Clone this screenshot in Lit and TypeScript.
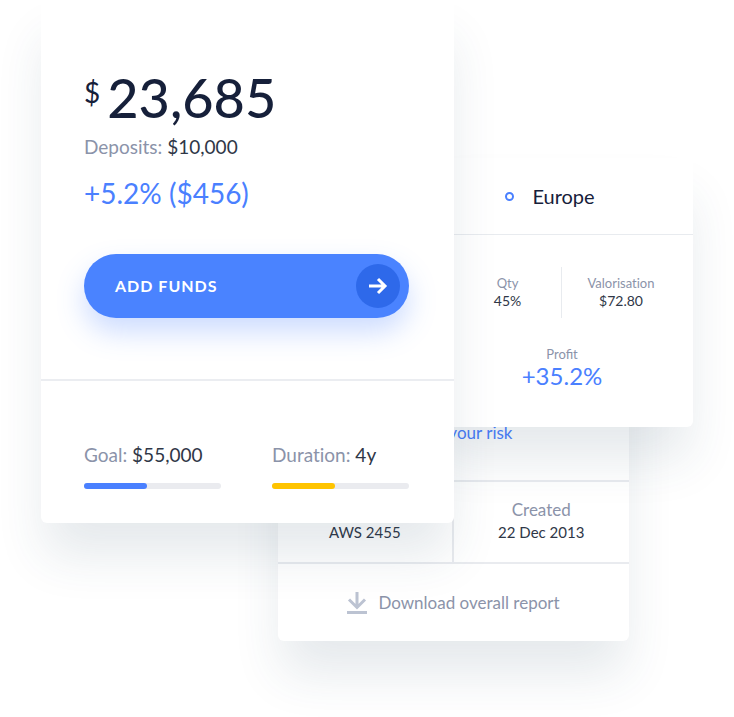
import { LitElement, html, css } from "lit";
import { customElement, property } from "lit/decorators.js";

@customElement("progress-meter")
class ProgressMeter extends LitElement {
  @property() label = "";
  @property() value = "";
  @property({ type: Number }) percent = 0;
  @property() tone = "blue";

  static styles = css`
    :host { display: block; flex: 1; }
    .caption {
      font-size: 19px;
      line-height: 24px;
      font-variant-ligatures: none;
      white-space: nowrap;
      color: #8b93a9;
    }
    .value { color: #2f3747; }
    .track { margin-top: 16px; height: 6px; border-radius: 3px; background: #eaebef; }
    .fill { height: 6px; border-radius: 3px; background: #4a80ff; }
    .fill.yellow { background: #ffc400; }
  `;

  render() {
    return html`
      <div class="caption" id="caption">${this.label}: <span class="value">${this.value}</span></div>
      <div class="track" role="progressbar" aria-labelledby="caption" aria-valuenow=${this.percent}>
        <div class="fill ${this.tone}" style="width:${this.percent}%"></div>
      </div>
    `;
  }
}

@customElement("app-root")
class AppRoot extends LitElement {
  static styles = css`
    :host {
      display: block;
      min-height: 100vh;
      overflow: hidden;
      background: #fff;
      font-family: Lato, "Open Sans", sans-serif;
      color: #2f3747;
    }
    * { box-sizing: border-box; }
    h1, h2, p, dl, dd { margin: 0; font-weight: 400; }
    .stage {
      display: grid;
      grid-template-columns: 41fr 237fr 153fr 23fr 175fr 64fr 41fr;
      align-items: start;
      padding-bottom: 76px;
    }
    .card {
      grid-row: 1;
      min-width: 0;
      background: #fff;
      border-radius: 6px;
      box-shadow: 0 36px 50px -4px rgba(40, 75, 100, 0.12);
    }
    .muted { color: #8b93a9; }
    .blue { color: #4a80ff; }

    .balance { grid-column: 2 / 5; z-index: 3; }
    .summary { padding: 65px 45px 61px 43px; border-bottom: 2px solid #ebedf1; }
    .amount {
      display: flex;
      align-items: flex-start;
      gap: 7px;
      font-size: 54px;
      line-height: 66px;
      font-weight: 500;
      color: #16203a;
    }
    .currency { font-size: 28px; line-height: 54px; font-weight: 400; }
    .deposits { margin-top: 4px; font-size: 19px; line-height: 24px; }
    .change { margin-top: 16px; font-size: 28px; line-height: 36px; }
    .add {
      display: flex;
      align-items: center;
      justify-content: space-between;
      width: 100%;
      height: 64px;
      margin-top: 43px;
      padding: 0 9px 0 31px;
      border: 0;
      border-radius: 32px;
      background: #4a83ff;
      box-shadow: 0 14px 28px rgba(74, 128, 255, 0.28);
      color: #fff;
      font: 700 16px/24px Lato, sans-serif;
      letter-spacing: 1px;
      cursor: pointer;
    }
    .knob {
      display: grid;
      place-items: center;
      width: 44px;
      height: 44px;
      border-radius: 50%;
      background: #2e69ea;
    }
    .goals { display: flex; gap: 51px; padding: 62px 45px 34px 43px; }

    .region { grid-column: 4 / 7; z-index: 2; margin-top: 158px; }
    .region-head {
      display: flex;
      align-items: center;
      justify-content: center;
      gap: 18px;
      height: 77px;
      padding-right: 24px;
      border-bottom: 1px solid #e8ebef;
      font-size: 20px;
      line-height: 24px;
      color: #16203a;
    }
    .dot { width: 9px; height: 9px; border: 2px solid #4a80ff; border-radius: 50%; }
    .stats {
      display: grid;
      grid-template-columns: 107fr 119fr;
      padding: 32px 13px 0 23px;
      text-align: center;
      font-variant-ligatures: none;
    }
    .stat { padding: 7px 0 8px; font-size: 14px; line-height: 18px; }
    .stat + .stat { border-left: 1px solid #e8ebef; }
    .label { font-size: 13px; line-height: 18px; color: #8b93a9; }
    .profit { padding: 27px 0 39px; text-align: center; }
    .profit-value { font-size: 24px; line-height: 25px; }

    .report { grid-column: 3 / 6; z-index: 1; margin-top: 300px; text-align: center; font-size: 17px; line-height: 22px; }
    .risk { padding: 122px 0 36px; border-bottom: 2px solid #e9ebef; }
    .risk a, .download { text-decoration: none; }
    .facts { display: grid; grid-template-columns: 1fr 1fr; border-bottom: 2px solid #e9ebef; }
    .fact { padding: 17px 0 19px; }
    .fact dd { font-size: 15px; }
    .fact:first-child { border-right: 2px solid #e9ebef; }
    .download {
      display: flex;
      align-items: center;
      justify-content: center;
      gap: 11px;
      height: 77px;
    }
  `;

  render() {
    return html`
      <main class="stage">
        <section class="card balance">
          <div class="summary">
            <h1 class="amount"><span class="currency">$</span><span>23,685</span></h1>
            <p class="deposits"><span class="muted">Deposits:</span> $10,000</p>
            <p class="change blue">+5.2% ($456)</p>
            <button class="add" type="button">
              ADD FUNDS
              <span class="knob">
                <svg width="20" height="18" viewBox="0 0 20 18" fill="none" stroke="#fff" stroke-width="3" aria-hidden="true">
                  <path d="M1 9H17M10 2l7 7-7 7" />
                </svg>
              </span>
            </button>
          </div>
          <div class="goals">
            <progress-meter label="Goal" value="$55,000" percent="46"></progress-meter>
            <progress-meter label="Duration" value="4y" percent="46" tone="yellow"></progress-meter>
          </div>
        </section>

        <section class="card region">
          <h2 class="region-head"><span class="dot"></span>Europe</h2>
          <dl class="stats">
            <div class="stat"><dt class="label">Qty</dt><dd>45%</dd></div>
            <div class="stat"><dt class="label">Valorisation</dt><dd>$72.80</dd></div>
          </dl>
          <div class="profit">
            <p class="label">Profit</p>
            <p class="profit-value blue">+35.2%</p>
          </div>
        </section>

        <section class="card report">
          <p class="risk"><a class="blue" href="#risk">Assess your risk</a></p>
          <dl class="facts">
            <div class="fact"><dt class="muted">Account</dt><dd>AWS 2455</dd></div>
            <div class="fact"><dt class="muted">Created</dt><dd>22 Dec 2013</dd></div>
          </dl>
          <a class="download muted" href="#report">
            <svg width="20" height="22" viewBox="0 0 20 22" fill="none" stroke="#bcc3d2" stroke-width="3" aria-hidden="true">
              <path d="M10 0V15M2 7.500l8 8 8-8" />
              <path d="M0 20.500H20" />
            </svg>
            Download overall report
          </a>
        </section>
      </main>
    `;
  }
}
